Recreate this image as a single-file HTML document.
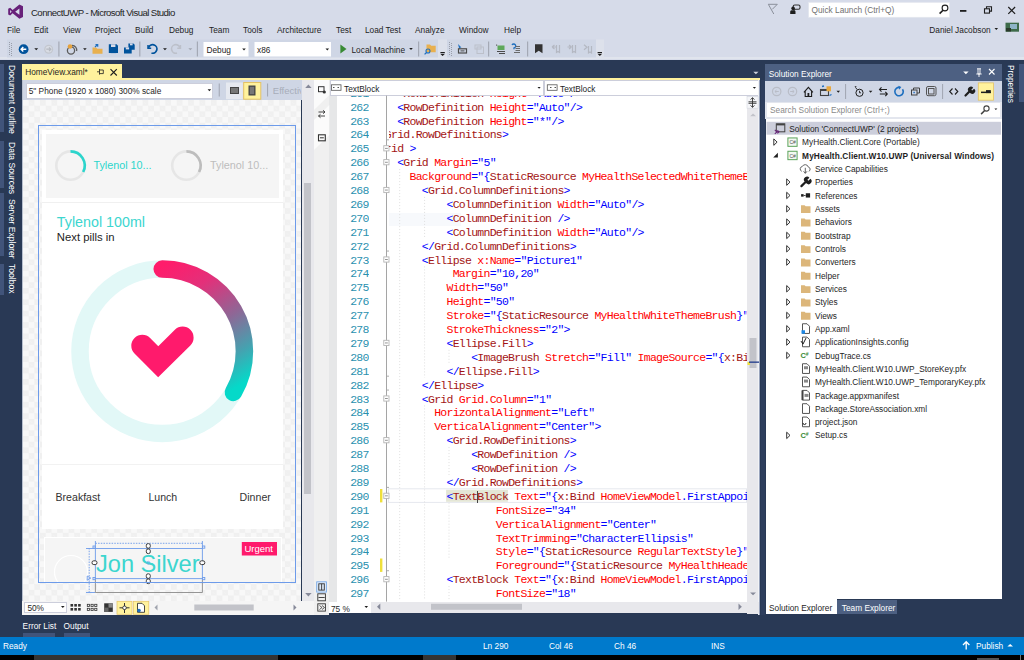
<!DOCTYPE html>
<html><head><meta charset="utf-8">
<style>
*{margin:0;padding:0;box-sizing:border-box}
html,body{width:1024px;height:660px;overflow:hidden;background:#293955;font-family:"Liberation Sans",sans-serif}
.a{position:absolute}
.t{position:absolute;white-space:nowrap;font-family:"Liberation Sans",sans-serif;font-size:8.3px;line-height:10px;color:#1E1E1E}
.m{font-family:"Liberation Mono",monospace}
svg{position:absolute;overflow:visible}
#lnums{left:337.5px;top:95.6px;width:31.2px;height:506px;overflow:hidden;font-family:"Liberation Mono",monospace;font-size:11.5px;letter-spacing:-0.737px;line-height:13.9px;color:#2B91AF}
#lnums div{position:absolute;right:0;white-space:pre}
#code{left:389px;top:95.6px;width:358.2px;height:506.2px;overflow:hidden;font-family:"Liberation Mono",monospace;font-size:11.5px;letter-spacing:-0.737px;line-height:13.9px}
#code div{position:absolute;white-space:pre}
.b{color:#0000FF}.e{color:#A31515}.r{color:#FF0000}

</style></head><body>
<!-- title + menu + toolbar -->
<div class="a" style="left:0;top:0;width:1024px;height:60px;background:#D6DBE9"></div>
<div class="a" style="left:0;top:57.4px;width:1024px;height:2.1px;background:#E0E4ED"></div>

<svg width="1024" height="60" style="left:0;top:0">
 <!-- vs logo -->
 <path fill="#68217A" fill-rule="evenodd" d="M19.4,4.5 L23,6.2 L23,17.1 L19.4,18.8 L12.6,13.3 L10.2,15.6 L8.2,14.6 L8.2,8.7 L10.2,7.7 L12.6,10 Z M19.4,8.6 L15.2,11.65 L19.4,14.7 Z M10.1,10.1 L10.1,13.2 L11.7,11.65 Z"/>
 <!-- toolbar bgs -->
 <rect x="7" y="39.5" width="431" height="18" fill="#CFD6E5"/>
 <rect x="438" y="39.5" width="9" height="18" fill="#DDE1EB"/>
 <rect x="447" y="39.5" width="149" height="18" fill="#CFD6E5"/>
 <rect x="596" y="39.5" width="8" height="18" fill="#DDE1EB"/>
 <!-- grips -->
 <g fill="#999EAA">
  <rect x="9" y="42" width="1" height="1"/><rect x="11" y="43" width="1" height="1"/><rect x="9" y="44" width="1" height="1"/><rect x="11" y="45" width="1" height="1"/><rect x="9" y="46" width="1" height="1"/><rect x="11" y="47" width="1" height="1"/><rect x="9" y="48" width="1" height="1"/><rect x="11" y="49" width="1" height="1"/><rect x="9" y="50" width="1" height="1"/><rect x="11" y="51" width="1" height="1"/><rect x="9" y="52" width="1" height="1"/><rect x="11" y="53" width="1" height="1"/><rect x="9" y="54" width="1" height="1"/><rect x="11" y="55" width="1" height="1"/>
  <rect x="449" y="42" width="1" height="1"/><rect x="451" y="43" width="1" height="1"/><rect x="449" y="44" width="1" height="1"/><rect x="451" y="45" width="1" height="1"/><rect x="449" y="46" width="1" height="1"/><rect x="451" y="47" width="1" height="1"/><rect x="449" y="48" width="1" height="1"/><rect x="451" y="49" width="1" height="1"/><rect x="449" y="50" width="1" height="1"/><rect x="451" y="51" width="1" height="1"/><rect x="449" y="52" width="1" height="1"/><rect x="451" y="53" width="1" height="1"/><rect x="449" y="54" width="1" height="1"/><rect x="451" y="55" width="1" height="1"/>
 </g>
 <!-- separators -->
 <g fill="#A4A9B5">
  <rect x="58.3" y="41.5" width="1.2" height="15"/><rect x="139.2" y="41.5" width="1.2" height="15"/><rect x="196.8" y="41.5" width="1.2" height="15"/>
  <rect x="418" y="41.5" width="1.2" height="15"/><rect x="488" y="41.5" width="1.2" height="15"/><rect x="527" y="41.5" width="1.2" height="15"/>
 </g>
 <!-- back / fwd -->
 <circle cx="23.6" cy="49.2" r="4.9" fill="#00539C"/>
 <path d="M26.3,49.2 H21.3 M23.3,47 L21.1,49.2 L23.3,51.4" stroke="#fff" stroke-width="1.4" fill="none"/>
 <circle cx="48.7" cy="49.2" r="4.5" fill="#C3C7CF"/>
 <circle cx="48.7" cy="49.2" r="3.2" fill="#D8DCE4"/>
 <path d="M46.3,49.2 H50.8 M49,47.3 L50.9,49.2 L49,51.1" stroke="#B4B8C0" stroke-width="1.2" fill="none"/>
 <!-- dropdown tris -->
 <g fill="#1E1E1E">
  <path d="M34.3,48.3 h3.9 l-1.95,2 z"/><path d="M83.1,48.3 h3.6 l-1.8,2 z"/><path d="M163,48.3 h3.9 l-1.95,2 z"/><path d="M409.2,48 h3.6 l-1.8,2 z"/>
 </g>
 <path d="M188.4,48.3 h3.9 l-1.95,2 z" fill="#A0A4AE"/>
 <!-- new project -->
 <circle cx="71" cy="50.5" r="3.6" fill="none" stroke="#5B5B5B" stroke-width="1.3"/>
 <path d="M72,45.5 a4.5,4.5 0 0 1 4.6,5.5" fill="none" stroke="#5B5B5B" stroke-width="1.3"/>
 <circle cx="70" cy="46.5" r="2.3" fill="#E6A23C"/>
 <!-- open -->
 <path d="M92.5,47.5 h3.5 l1.3,1.3 h5.2 v5 h-10 z" fill="#E8B04F"/>
 <path d="M95,47 l2.5,-2.5 M95.5,44.5 h2.2 v2.2" stroke="#1E6FBF" stroke-width="1.2" fill="none"/>
 <!-- save -->
 <path d="M108.8,44.3 h7.8 l1.4,1.4 v7.4 h-9.2 z" fill="#00539C"/>
 <rect x="111" y="44.3" width="4.4" height="2.7" fill="#D6DBE9"/>
 <rect x="110.6" y="49.3" width="5.6" height="3.8" fill="#00539C"/>
 <!-- save all -->
 <path d="M128.4,43.4 h5 l1.3,1.3 v5 h-6.3 z" fill="#00539C"/>
 <rect x="130" y="43.4" width="2.6" height="1.9" fill="#D6DBE9"/>
 <path d="M124,47.4 h6.4 l1.3,1.3 v4.9 h-7.7 z" fill="#00539C"/>
 <rect x="125.8" y="47.4" width="3.3" height="2.0" fill="#D6DBE9"/>
 <!-- undo/redo -->
 <path d="M148,45 v3.2 h3.2" fill="none" stroke="#00539C" stroke-width="1.5"/>
 <path d="M148.5,47.8 a4.3,4.3 0 1 1 3,5.3" fill="none" stroke="#00539C" stroke-width="1.7"/>
 <path d="M180.5,45 v3.2 h-3.2" fill="none" stroke="#BCC0CA" stroke-width="1.4"/>
 <path d="M180,47.8 a4.3,4.3 0 1 0 -3,5.3" fill="none" stroke="#BCC0CA" stroke-width="1.6"/>
 <!-- play -->
 <path d="M340.4,44.5 L346.5,49 L340.4,53.5 z" fill="#388A34"/>
 <!-- find in files -->
 <path d="M426.5,44.5 h3.5 l1.2,1.2 h4.5 v6.5 h-9.2 z" fill="#E8B04F"/>
 <circle cx="428" cy="51" r="2" fill="none" stroke="#1E6FBF" stroke-width="1.1"/>
 <path d="M426.6,52.4 l-2,2" stroke="#1E6FBF" stroke-width="1.3"/>
 <!-- overflow -->
 <g fill="#1E1E1E"><rect x="440.4" y="52" width="4.4" height="1"/><path d="M440.2,53.8 h4.8 l-2.4,2.3z"/>
 <rect x="597.6" y="52" width="4.4" height="1"/><path d="M597.4,53.8 h4.8 l-2.4,2.3z"/></g>
 <!-- tb2 icons -->
 <path d="M458,44 l3.5,3.5 l-1.6,0.2 l-0.6,1.6 z" fill="#1E6FBF"/>
 <rect x="458.5" y="48.8" width="8" height="4.2" fill="none" stroke="#4A4A4A" stroke-width="1.2"/>
 <rect x="460.5" y="50.4" width="4" height="1" fill="#4A4A4A"/>
 <g fill="none" stroke="#BCC0CA" stroke-width="1"><rect x="475" y="45" width="6" height="4"/><rect x="477" y="47" width="6.5" height="6.5"/></g>
 <rect x="497.5" y="45.5" width="7" height="4.5" fill="#5EA85A"/>
 <g fill="#4A4A4A"><rect x="497" y="51" width="8" height="1"/><rect x="499" y="53" width="6" height="1"/><rect x="496" y="44.6" width="1.2" height="1"/></g>
 <path d="M512,45 a2,2 0 1 1 2,3 v1.2" fill="none" stroke="#1E6FBF" stroke-width="1.3"/>
 <g fill="#6A6A6A"><rect x="515.5" y="46" width="4.5" height="1"/><rect x="515.5" y="48" width="4.5" height="1"/><rect x="515.5" y="50" width="4.5" height="1"/><rect x="514" y="52" width="6" height="1"/></g>
 <path d="M535,44.2 h7.5 v9 l-3.75,-2.4 l-3.75,2.4 z" fill="#333"/>
 <g fill="none" stroke="#B4B8C2" stroke-width="1.2">
  <path d="M552,47 l2.5,-2 M552,47 l2.5,2 M552,47 h4"/><path d="M556.5,45 v7.5 l1.5,-1 l1.5,1 v-7.5"/>
  <path d="M571.5,47 l-2.5,-2 M571.5,47 l-2.5,2 M567.5,47 h4"/><path d="M572.5,45 v7.5 l1.5,-1 l1.5,1 v-7.5"/>
  <path d="M584,44.8 l3,2.5 l-3,2.5"/><path d="M588.5,46 v7 l1.5,-1 l1.5,1 v-7"/>
 </g>
 <!-- combos -->
 <rect x="203.5" y="42" width="45" height="14.5" fill="#fff" stroke="#CCCEDB" stroke-width="0"/>
 <rect x="254.5" y="42" width="76.5" height="14.5" fill="#fff"/>
 <path d="M242.2,48.5 h3.6 l-1.8,2 z M325.5,48.5 h3.6 l-1.8,2 z" fill="#1E1E1E"/>
 <!-- right title controls -->
 <path d="M768.2,4.3 H777.3 L772.3,9.3 M768.4,4.4 L773.8,14" fill="none" stroke="#8A8F9A" stroke-width="1"/>
 <rect x="793.2" y="5" width="6.8" height="4.2" rx="1.5" fill="none" stroke="#333" stroke-width="1.1"/><path d="M795,9.2 l-1.2,1.6" stroke="#333" stroke-width="1"/><circle cx="793.1" cy="8.4" r="1.8" fill="#1E1E1E"/><path d="M790.2,13.9 v-2.4 a1.5,1.5 0 0 1 1.5,-1.2 h2.5 a1.5,1.5 0 0 1 1.3,1.2 v2.4 z" fill="#1E1E1E"/>
 <rect x="808.6" y="2.3" width="141" height="15" fill="#fff" stroke="#E3E6EE" stroke-width="0.8"/>
 <circle cx="945" cy="8" r="2.9" fill="none" stroke="#1E1E1E" stroke-width="1.1"/>
 <path d="M943,10.2 l-3.4,3.4" stroke="#1E1E1E" stroke-width="1.6"/>
 <rect x="960" y="10" width="6.4" height="1.8" fill="#1E1E1E"/>
 <g fill="none" stroke="#1E1E1E" stroke-width="1.1"><rect x="984.5" y="8.8" width="5" height="4.3"/><path d="M986.5,8.8 v-2 h5 v4.3 h-2"/></g>
 <path d="M1008.3,7 l6.8,6.8 M1015.1,7 l-6.8,6.8" stroke="#1E1E1E" stroke-width="1.2"/>
 <path d="M994.5,28 h3.6 l-1.8,2 z" fill="#1E1E1E"/>
 <rect x="1005.5" y="22.7" width="13.5" height="9" fill="#3E6B4A"/>
 <rect x="1010" y="24" width="7" height="5" fill="#8FB4C8"/>
 <rect x="1006" y="28" width="5" height="3.5" fill="#2A3A2A"/>
</svg>
<div class="t" style="left:811.5px;top:5px;color:#717171">Quick Launch (Ctrl+Q)</div>
<div class="t" style="left:929.3px;top:25px">Daniel Jacobson</div>
<div class="t" style="left:206.5px;top:44.5px">Debug</div>
<div class="t" style="left:257px;top:44.5px">x86</div>
<div class="t" style="left:351.5px;top:44.5px">Local Machine</div>

<div class="t" style="left:31px;top:7.5px;font-size:9.6px;letter-spacing:-0.56px;color:#1E1E1E">ConnectUWP - Microsoft Visual Studio</div>
<div class="t" style="left:7px;top:25px">File</div>
<div class="t" style="left:34px;top:25px">Edit</div>
<div class="t" style="left:63px;top:25px">View</div>
<div class="t" style="left:95px;top:25px">Project</div>
<div class="t" style="left:135px;top:25px">Build</div>
<div class="t" style="left:169px;top:25px">Debug</div>
<div class="t" style="left:209px;top:25px">Team</div>
<div class="t" style="left:243px;top:25px">Tools</div>
<div class="t" style="left:277px;top:25px">Architecture</div>
<div class="t" style="left:336px;top:25px">Test</div>
<div class="t" style="left:365px;top:25px">Load Test</div>
<div class="t" style="left:415px;top:25px">Analyze</div>
<div class="t" style="left:459px;top:25px">Window</div>
<div class="t" style="left:504px;top:25px">Help</div>


<!-- left vertical tabs -->
<div class="a" style="left:0;top:63.6px;width:4px;height:68.4px;background:#41547A"></div>
<div class="a" style="left:0;top:141.3px;width:4px;height:47px;background:#41547A"></div>
<div class="a" style="left:0;top:193px;width:4px;height:62.5px;background:#41547A"></div>
<div class="a" style="left:0;top:263.6px;width:4px;height:31px;background:#41547A"></div>
<div class="t" style="left:16.8px;top:64.5px;font-size:8.6px;color:#fff;transform-origin:0 0;transform:rotate(90deg)">Document Outline</div>
<div class="t" style="left:16.8px;top:142.3px;font-size:8.6px;color:#fff;transform-origin:0 0;transform:rotate(90deg)">Data Sources</div>
<div class="t" style="left:16.8px;top:199px;font-size:8.6px;color:#fff;transform-origin:0 0;transform:rotate(90deg)">Server Explorer</div>
<div class="t" style="left:16.8px;top:263.6px;font-size:8.6px;color:#fff;transform-origin:0 0;transform:rotate(90deg)">Toolbox</div>
<div class="a" style="left:1019.2px;top:64px;width:4.8px;height:37.6px;background:#41547A"></div>
<div class="t" style="left:1016px;top:64.7px;color:#fff;transform-origin:0 0;transform:rotate(90deg)">Properties</div>

<!-- doc tab -->
<div class="a" style="left:22px;top:64px;width:99.7px;height:16px;background:#FFF29D"></div>
<div class="a" style="left:22px;top:78.3px;width:738.2px;height:1.8px;background:#FFF29D"></div>
<div class="t" style="left:25.2px;top:67px">HomeView.xaml*</div>
<svg width="30" height="16" style="left:95px;top:64px">
 <path d="M2,7.8 h2.5 M4.5,5 v5.6 M4.5,6 h3.8 v3.6 h-3.8" fill="none" stroke="#1E1E1E" stroke-width="0.8"/>
 <path d="M15.5,5.2 l6.3,6.3 M21.8,5.2 l-6.3,6.3" stroke="#1E1E1E" stroke-width="1.1"/>
</svg>
<path></path>
<svg width="10" height="6" style="left:752px;top:70px"><path d="M1.3,1.7 h5.2 l-2.6,2.6 z" fill="#CED4DD"/></svg>

<!-- designer -->
<div class="a" style="left:22px;top:80px;width:279.5px;height:20px;background:#CFD6E5"></div>
<div class="a" style="left:22px;top:80px;width:1.3px;height:535px;background:#B8C0CF"></div>
<div id="designer-canvas" class="a" style="left:23.3px;top:100px;width:278.2px;height:501px;background-color:#F8F8F8;background-image:linear-gradient(45deg,#F0F0F0 25%,transparent 25%,transparent 75%,#F0F0F0 75%),linear-gradient(45deg,#F0F0F0 25%,transparent 25%,transparent 75%,#F0F0F0 75%);background-size:11.4px 11.4px;background-position:0 0,5.7px 5.7px"></div>
<div class="a" style="left:25.6px;top:82.5px;width:187.4px;height:16px;background:#fff;border:1px solid #CCCEDB"></div>
<div class="t" style="left:28.75px;top:86px">5" Phone (1920 x 1080) 300% scale</div>
<svg width="300" height="22" style="left:0;top:78px">
 <path d="M207.6,11.3 h3.6 l-1.8,2 z" fill="#1E1E1E"/>
 <rect x="218.7" y="5.5" width="1.1" height="13" fill="#A4A9B5"/>
 <rect x="226" y="4.5" width="16.8" height="16.7" fill="#E6E9F0"/>
 <rect x="230" y="9" width="9" height="7" fill="#444" /><rect x="231" y="10" width="7" height="5" fill="#777"/>
 <rect x="243.7" y="4.5" width="17.1" height="16.7" fill="#FFF29D" stroke="#E5C365" stroke-width="1"/>
 <rect x="248.5" y="7.5" width="7" height="10" fill="#444"/><rect x="249.8" y="8.8" width="4.4" height="7.4" fill="#777"/>
 <rect x="267" y="5.5" width="1.1" height="13" fill="#A4A9B5"/>
</svg>
<div class="t" style="left:272.8px;top:86px;width:28.5px;overflow:hidden;color:#A7ADB9;font-size:9.5px">Effective</div>

<!-- phone -->
<div class="a" style="left:41.5px;top:130px;width:241.5px;height:399px;background:#fff"></div>
<div class="a" style="left:45.9px;top:133.6px;width:233.5px;height:64px;background:#F5F5F5"></div>
<div class="a" style="left:41.5px;top:202px;width:241.5px;height:1px;background:#F0F0F0"></div>
<div class="a" style="left:41.5px;top:464px;width:241.5px;height:1px;background:#F2F2F2"></div>
<div class="a" style="left:44.2px;top:537.4px;width:238.3px;height:45px;background:#F5F5F5;border:1.5px solid #fff;border-bottom:none"></div>
<svg width="300" height="600" style="left:0;top:0">
 <circle cx="70.5" cy="165.6" r="14.2" fill="none" stroke="#E6E6E6" stroke-width="2.6"/>
 <path d="M70.5,151.4 A14.2,14.2 0 0 1 83.2,172" fill="none" stroke="#2BD5CC" stroke-width="2.6"/>
 <circle cx="186.4" cy="165.6" r="14.2" fill="none" stroke="#E6E6E6" stroke-width="2.6"/>
 <path d="M186.4,151.4 A14.2,14.2 0 0 1 199.1,172" fill="none" stroke="#BDBDBD" stroke-width="2.6"/>
 <defs>
  <linearGradient id="rg" x1="165" y1="265" x2="240" y2="385" gradientUnits="userSpaceOnUse">
   <stop offset="0" stop-color="#FF1C6B"/><stop offset="0.25" stop-color="#E3307A"/><stop offset="0.55" stop-color="#8E6796"/><stop offset="0.8" stop-color="#45A2B0"/><stop offset="1" stop-color="#05D9C9"/>
  </linearGradient>
 </defs>
 <circle cx="162.2" cy="351.3" r="82.2" fill="none" stroke="#E2F8F7" stroke-width="17.5"/>
 <path d="M162.2,269.1 A82.2,82.2 0 0 1 233.4,392.4" fill="none" stroke="url(#rg)" stroke-width="17.5" stroke-linecap="round"/>
 <path d="M142.3,345.8 L158.2,361.8 L182.6,337.6" fill="none" stroke="#FF1A6C" stroke-width="22" stroke-linecap="round" stroke-linejoin="miter"/>
 <rect x="241.8" y="542" width="35.2" height="13.5" fill="#FF1A6C"/>
 <clipPath id="pc"><rect x="38" y="125" width="258" height="457"/></clipPath><circle cx="71" cy="572" r="16.5" fill="none" stroke="#FFFFFF" stroke-width="1.2" clip-path="url(#pc)"/>
</svg>
<div class="t" style="left:93.4px;top:159px;font-size:10.8px;line-height:12px;color:#2BD5CC">Tylenol 10...</div>
<div class="t" style="left:210px;top:159px;font-size:10.8px;line-height:12px;color:#BDBDBD">Tylenol 10...</div>
<div class="t" style="left:56.8px;top:213.5px;font-size:14.3px;line-height:16px;color:#3CD6CF">Tylenol 100ml</div>
<div class="t" style="left:56.8px;top:231px;font-size:11.3px;line-height:12px;color:#1E1E1E">Next pills in</div>
<div class="t" style="left:55.5px;top:491px;font-size:10.6px;line-height:12px;color:#333">Breakfast</div>
<div class="t" style="left:148.4px;top:491px;font-size:10.6px;line-height:12px;color:#333">Lunch</div>
<div class="t" style="left:239.6px;top:491px;font-size:10.6px;line-height:12px;color:#333">Dinner</div>
<div class="t" style="left:244.5px;top:543px;font-size:9.5px;line-height:11px;color:#fff">Urgent</div>
<div class="t" style="left:96px;top:551px;font-size:23.6px;line-height:26px;color:#3CD6CF">Jon Silver</div>
<svg width="300" height="600" style="left:0;top:0">
 <g fill="none" stroke="#6D9BEA" stroke-width="0.9">
  <line x1="95.4" y1="548.5" x2="202.4" y2="548.5"/>
  <line x1="95.4" y1="578.6" x2="202.4" y2="578.6"/>
  <line x1="95.4" y1="541" x2="95.4" y2="580"/>
  <line x1="202.4" y1="541" x2="202.4" y2="580"/>
  <line x1="95.4" y1="543.3" x2="202.4" y2="543.3" stroke-dasharray="1.5,1.2"/>
  <line x1="89.2" y1="548" x2="89.2" y2="593" stroke-dasharray="1.5,1.2"/>
  <line x1="86" y1="548.5" x2="95.4" y2="548.5"/>
  <line x1="86" y1="592.5" x2="95.4" y2="592.5"/>
  <rect x="93" y="546" width="2.2" height="2.2"/><rect x="202.6" y="546" width="2.2" height="2.2"/>
  <rect x="93" y="577.5" width="2.2" height="2.2"/><rect x="202.6" y="577.5" width="2.2" height="2.2"/>
  <path d="M87.2,576 v4.2 l3.6,-2.1 z"/>
 </g>
 <g fill="none" stroke="#8A8A8A" stroke-width="0.9">
  <line x1="95.4" y1="580" x2="95.4" y2="592.5"/><line x1="202.4" y1="580" x2="202.4" y2="592.5"/><line x1="95.4" y1="592.5" x2="202.4" y2="592.5"/>
 </g>
 <g fill="#fff" stroke="#3A3A3A" stroke-width="1">
  <rect x="146.3" y="543.6" width="4" height="4.6" rx="1.8"/><rect x="146.3" y="549" width="4" height="4.6" rx="1.8"/>
  <rect x="146.3" y="573.8" width="4" height="4.6" rx="1.8"/><rect x="146.3" y="579" width="4" height="4.6" rx="1.8"/>
  <rect x="92" y="560.8" width="5" height="3.8" rx="1.8"/><rect x="199.8" y="560.8" width="5" height="3.8" rx="1.8"/>
 </g>
 <circle cx="148.3" cy="562.8" r="1.5" fill="none" stroke="#6D9BEA" stroke-width="0.7"/>
</svg>

<div class="a" id="pframe" style="left:37.8px;top:124.8px;width:258.4px;height:458px;border:1.3px solid #6D9BEA"></div>
<!-- designer vertical scrollbar -->
<div class="a" style="left:301.5px;top:80px;width:12.5px;height:521px;background:#E8E8EC"></div>
<div class="a" style="left:304.4px;top:183.4px;width:6.4px;height:310.4px;background:#C2C3C9"></div>
<svg width="14" height="520" style="left:301.5px;top:80px">
 <path d="M3.2,8 l3.2,-3.5 l3.2,3.5 z" fill="#868999"/>
 <path d="M3.2,513 l3.2,3.5 l3.2,-3.5 z" fill="#868999"/>
</svg>
<!-- designer bottom toolbar -->
<div class="a" style="left:22px;top:601px;width:292px;height:13.8px;background:#F5F5F5"></div>
<div class="a" style="left:24px;top:601.8px;width:43px;height:11px;background:#fff;border:1px solid #CCCEDB"></div>
<div class="t" style="left:27.4px;top:603px">50%</div>

<!-- split column -->
<div class="a" style="left:314px;top:80px;width:15.3px;height:535px;background:#F0F0F0"></div>

<!-- code editor -->
<div class="a" style="left:329.3px;top:80px;width:429.3px;height:521.8px;background:#fff"></div>
<div class="a" style="left:329.3px;top:80px;width:8.2px;height:521.8px;background:#E6E7E8"></div>
<div class="a" style="left:329.9px;top:80.3px;width:214px;height:15.3px;background:#fff;border:1px solid #CCCEDB"></div>
<div class="a" style="left:544px;top:80.3px;width:214.6px;height:15.3px;background:#fff;border:1px solid #CCCEDB"></div>
<div class="t" style="left:344px;top:83.5px">TextBlock</div>
<div class="t" style="left:560px;top:83.5px">TextBlock</div>
<div class="a" style="left:389px;top:213px;width:72px;height:13px;background:#F7F9FC"></div>
<!-- DECO START -->
<svg id="codedeco" width="1024" height="660" style="left:0;top:0;pointer-events:none"><rect x="388.5" y="488.8" width="358" height="13.6" fill="none" stroke="#E6E8EF" stroke-width="1"/><rect x="446.1" y="489.8" width="61.8" height="12" fill="#E4E6D6"/><rect x="386" y="95.6" width="1" height="506" fill="#A5A5A5"/><rect x="383.8" y="145.7" width="5.2" height="5.2" fill="#fff" stroke="#B5B5B5" stroke-width="0.9"/><rect x="385" y="147.9" width="2.8" height="0.9" fill="#8A8A8A"/><rect x="383.8" y="159.6" width="5.2" height="5.2" fill="#fff" stroke="#B5B5B5" stroke-width="0.9"/><rect x="385" y="161.8" width="2.8" height="0.9" fill="#8A8A8A"/><rect x="383.8" y="187.4" width="5.2" height="5.2" fill="#fff" stroke="#B5B5B5" stroke-width="0.9"/><rect x="385" y="189.6" width="2.8" height="0.9" fill="#8A8A8A"/><rect x="383.8" y="256.9" width="5.2" height="5.2" fill="#fff" stroke="#B5B5B5" stroke-width="0.9"/><rect x="385" y="259.1" width="2.8" height="0.9" fill="#8A8A8A"/><rect x="383.8" y="340.3" width="5.2" height="5.2" fill="#fff" stroke="#B5B5B5" stroke-width="0.9"/><rect x="385" y="342.5" width="2.8" height="0.9" fill="#8A8A8A"/><rect x="383.8" y="395.9" width="5.2" height="5.2" fill="#fff" stroke="#B5B5B5" stroke-width="0.9"/><rect x="385" y="398.1" width="2.8" height="0.9" fill="#8A8A8A"/><rect x="383.8" y="437.6" width="5.2" height="5.2" fill="#fff" stroke="#B5B5B5" stroke-width="0.9"/><rect x="385" y="439.8" width="2.8" height="0.9" fill="#8A8A8A"/><rect x="383.8" y="493.2" width="5.2" height="5.2" fill="#fff" stroke="#B5B5B5" stroke-width="0.9"/><rect x="385" y="495.4" width="2.8" height="0.9" fill="#8A8A8A"/><rect x="383.8" y="576.6" width="5.2" height="5.2" fill="#fff" stroke="#B5B5B5" stroke-width="0.9"/><rect x="385" y="578.8" width="2.8" height="0.9" fill="#8A8A8A"/><rect x="386.5" y="139.4" width="2.5" height="0.9" fill="#A5A5A5"/><rect x="386.5" y="250.6" width="2.5" height="0.9" fill="#A5A5A5"/><rect x="386.5" y="375.7" width="2.5" height="0.9" fill="#A5A5A5"/><rect x="386.5" y="389.6" width="2.5" height="0.9" fill="#A5A5A5"/><rect x="386.5" y="486.9" width="2.5" height="0.9" fill="#A5A5A5"/><rect x="386.5" y="570.3" width="2.5" height="0.9" fill="#A5A5A5"/><line x1="399.7" y1="169.1" x2="399.7" y2="600.1" stroke="#DEDEDE" stroke-width="1" stroke-dasharray="1,2"/><line x1="424.6" y1="196.9" x2="424.6" y2="238.7" stroke="#DEDEDE" stroke-width="1" stroke-dasharray="1,2"/><line x1="424.6" y1="266.4" x2="424.6" y2="377.7" stroke="#DEDEDE" stroke-width="1" stroke-dasharray="1,2"/><line x1="424.6" y1="405.4" x2="424.6" y2="600.1" stroke="#DEDEDE" stroke-width="1" stroke-dasharray="1,2"/><line x1="449.0" y1="349.8" x2="449.0" y2="363.8" stroke="#DEDEDE" stroke-width="1" stroke-dasharray="1,2"/><line x1="449.0" y1="447.1" x2="449.0" y2="475.0" stroke="#DEDEDE" stroke-width="1" stroke-dasharray="1,2"/><line x1="449.0" y1="502.7" x2="449.0" y2="558.4" stroke="#DEDEDE" stroke-width="1" stroke-dasharray="1,2"/><line x1="449.0" y1="586.1" x2="449.0" y2="600.1" stroke="#DEDEDE" stroke-width="1" stroke-dasharray="1,2"/><rect x="380" y="489.0" width="2.4" height="13.4" fill="#EFE03B"/><rect x="380" y="558.5" width="2.4" height="13.4" fill="#EFE03B"/></svg>

<!-- DECO END -->
<!-- CODE START -->
<div id="lnums" class="a"><div style="top:-8.80px">261</div><div style="top:5.10px">262</div><div style="top:19.00px">263</div><div style="top:32.90px">264</div><div style="top:46.80px">265</div><div style="top:60.70px">266</div><div style="top:74.60px">267</div><div style="top:88.50px">268</div><div style="top:102.40px">269</div><div style="top:116.30px">270</div><div style="top:130.20px">271</div><div style="top:144.10px">272</div><div style="top:158.00px">273</div><div style="top:171.90px">274</div><div style="top:185.80px">275</div><div style="top:199.70px">276</div><div style="top:213.60px">277</div><div style="top:227.50px">278</div><div style="top:241.40px">279</div><div style="top:255.30px">280</div><div style="top:269.20px">281</div><div style="top:283.10px">282</div><div style="top:297.00px">283</div><div style="top:310.90px">284</div><div style="top:324.80px">285</div><div style="top:338.70px">286</div><div style="top:352.60px">287</div><div style="top:366.50px">288</div><div style="top:380.40px">289</div><div style="top:394.30px">290</div><div style="top:408.20px">291</div><div style="top:422.10px">292</div><div style="top:436.00px">293</div><div style="top:449.90px">294</div><div style="top:463.80px">295</div><div style="top:477.70px">296</div><div style="top:491.60px">297</div></div>
<div id="code" class="a"><div style="top:-8.80px;left:8.16px"><span class="b">&lt;</span><span class="e">RowDefinition</span><span class="r"> Height</span><span class="b">=&quot;Auto&quot;/&gt;</span></div><div style="top:5.10px;left:8.16px"><span class="b">&lt;</span><span class="e">RowDefinition</span><span class="r"> Height</span><span class="b">=&quot;Auto&quot;/&gt;</span></div><div style="top:19.00px;left:8.16px"><span class="b">&lt;</span><span class="e">RowDefinition</span><span class="r"> Height</span><span class="b">=&quot;*&quot;/&gt;</span></div><div style="top:32.90px;left:-16.50px"><span class="b">&lt;/</span><span class="e">Grid.RowDefinitions</span><span class="b">&gt;</span></div><div style="top:46.80px;left:-22.67px"><span class="b">&lt;/</span><span class="e">Grid</span><span class="b"> &gt;</span></div><div style="top:60.70px;left:8.16px"><span class="b">&lt;</span><span class="e">Grid</span><span class="r"> Margin</span><span class="b">=&quot;5&quot;</span></div><div style="top:74.60px;left:20.49px"><span class="r">Background</span><span class="b">=&quot;{</span><span class="e">StaticResource</span><span class="r"> MyHealthSelectedWhiteThemeBrush</span><span class="b">}&quot;&gt;</span></div><div style="top:88.50px;left:32.82px"><span class="b">&lt;</span><span class="e">Grid.ColumnDefinitions</span><span class="b">&gt;</span></div><div style="top:102.40px;left:57.48px"><span class="b">&lt;</span><span class="e">ColumnDefinition</span><span class="r"> Width</span><span class="b">=&quot;Auto&quot;/&gt;</span></div><div style="top:116.30px;left:57.48px"><span class="b">&lt;</span><span class="e">ColumnDefinition</span><span class="b"> /&gt;</span></div><div style="top:130.20px;left:57.48px"><span class="b">&lt;</span><span class="e">ColumnDefinition</span><span class="r"> Width</span><span class="b">=&quot;Auto&quot;/&gt;</span></div><div style="top:144.10px;left:32.82px"><span class="b">&lt;/</span><span class="e">Grid.ColumnDefinitions</span><span class="b">&gt;</span></div><div style="top:158.00px;left:32.82px"><span class="b">&lt;</span><span class="e">Ellipse</span><span class="r"> x:Name</span><span class="b">=&quot;Picture1&quot;</span></div><div style="top:171.90px;left:63.64px"><span class="r">Margin</span><span class="b">=&quot;10,20&quot;</span></div><div style="top:185.80px;left:57.48px"><span class="r">Width</span><span class="b">=&quot;50&quot;</span></div><div style="top:199.70px;left:57.48px"><span class="r">Height</span><span class="b">=&quot;50&quot;</span></div><div style="top:213.60px;left:57.48px"><span class="r">Stroke</span><span class="b">=&quot;{</span><span class="e">StaticResource</span><span class="r"> MyHealthWhiteThemeBrush</span><span class="b">}&quot;</span></div><div style="top:227.50px;left:57.48px"><span class="r">StrokeThickness</span><span class="b">=&quot;2&quot;&gt;</span></div><div style="top:241.40px;left:57.48px"><span class="b">&lt;</span><span class="e">Ellipse.Fill</span><span class="b">&gt;</span></div><div style="top:255.30px;left:82.14px"><span class="b">&lt;</span><span class="e">ImageBrush</span><span class="r"> Stretch</span><span class="b">=&quot;Fill&quot;</span><span class="r"> ImageSource</span><span class="b">=&quot;{</span><span class="e">x:Bind</span><span class="r"> Item.Picture</span></div><div style="top:269.20px;left:57.48px"><span class="b">&lt;/</span><span class="e">Ellipse.Fill</span><span class="b">&gt;</span></div><div style="top:283.10px;left:32.82px"><span class="b">&lt;/</span><span class="e">Ellipse</span><span class="b">&gt;</span></div><div style="top:297.00px;left:32.82px"><span class="b">&lt;</span><span class="e">Grid</span><span class="r"> Grid.Column</span><span class="b">=&quot;1&quot;</span></div><div style="top:310.90px;left:45.15px"><span class="r">HorizontalAlignment</span><span class="b">=&quot;Left&quot;</span></div><div style="top:324.80px;left:45.15px"><span class="r">VerticalAlignment</span><span class="b">=&quot;Center&quot;&gt;</span></div><div style="top:338.70px;left:57.48px"><span class="b">&lt;</span><span class="e">Grid.RowDefinitions</span><span class="b">&gt;</span></div><div style="top:352.60px;left:82.14px"><span class="b">&lt;</span><span class="e">RowDefinition</span><span class="b"> /&gt;</span></div><div style="top:366.50px;left:82.14px"><span class="b">&lt;</span><span class="e">RowDefinition</span><span class="b"> /&gt;</span></div><div style="top:380.40px;left:57.48px"><span class="b">&lt;/</span><span class="e">Grid.RowDefinitions</span><span class="b">&gt;</span></div><div style="top:394.30px;left:57.48px"><span class="b">&lt;</span><span class="e">TextBlock</span><span class="r"> Text</span><span class="b">=&quot;{</span><span class="e">x:Bind</span><span class="r"> HomeViewModel</span><span class="b">.FirstAppointment</span></div><div style="top:408.20px;left:106.80px"><span class="r">FontSize</span><span class="b">=&quot;34&quot;</span></div><div style="top:422.10px;left:106.80px"><span class="r">VerticalAlignment</span><span class="b">=&quot;Center&quot;</span></div><div style="top:436.00px;left:106.80px"><span class="r">TextTrimming</span><span class="b">=&quot;CharacterEllipsis&quot;</span></div><div style="top:449.90px;left:106.80px"><span class="r">Style</span><span class="b">=&quot;{</span><span class="e">StaticResource</span><span class="r"> RegularTextStyle</span><span class="b">}&quot;</span></div><div style="top:463.80px;left:106.80px"><span class="r">Foreground</span><span class="b">=&quot;{</span><span class="e">StaticResource</span><span class="r"> MyHealthHeaderBrush</span><span class="b">}&quot;</span></div><div style="top:477.70px;left:57.48px"><span class="b">&lt;</span><span class="e">TextBlock</span><span class="r"> Text</span><span class="b">=&quot;{</span><span class="e">x:Bind</span><span class="r"> HomeViewModel</span><span class="b">.FirstAppointment</span></div><div style="top:491.60px;left:106.80px"><span class="r">FontSize</span><span class="b">=&quot;18&quot;</span></div></div>

<!-- CODE END -->
<div class="a" style="left:477.3px;top:490.5px;width:0.9px;height:12px;background:#444"></div>
<!-- code v scrollbar -->
<div class="a" style="left:747.3px;top:95.6px;width:10.3px;height:518px;background:#E8E8EC"></div>
<div class="a" style="left:757.6px;top:80px;width:1.2px;height:534.5px;background:#F2F3F6"></div>
<div class="a" style="left:758.8px;top:80px;width:1.3px;height:534.5px;background:#9AA5BD"></div>
<!-- code h scrollbar -->
<div class="a" style="left:329.3px;top:601.8px;width:429.3px;height:11.5px;background:#E8E8EC"></div>
<div class="a" style="left:329.4px;top:602.4px;width:41.2px;height:10.3px;background:#fff"></div>
<div class="t" style="left:331px;top:603.5px">75 %</div>

<!-- solution explorer -->
<div class="a" style="left:760.6px;top:80px;width:4px;height:535px;background:#2E3E5D"></div>
<div class="a" style="left:765px;top:64.2px;width:236.6px;height:16.5px;background:#4D6082"></div>
<div class="t" style="left:768.7px;top:68.5px;color:#fff">Solution Explorer</div>
<div class="a" style="left:765px;top:80.7px;width:236.6px;height:21.7px;background:#CFD6E5"></div>
<div class="a" style="left:765px;top:102.4px;width:236.6px;height:16.5px;background:#E3E6EE"></div>
<div class="a" style="left:766.6px;top:103px;width:233px;height:14.3px;background:#fff"></div>
<div class="t" style="left:770px;top:105.3px;color:#8A8A8A">Search Solution Explorer (Ctrl+;)</div>
<div class="a" style="left:765.5px;top:118.9px;width:236px;height:479.9px;background:#fff"></div>
<div class="a" style="left:765.5px;top:598.8px;width:71.8px;height:15.2px;background:#fff"></div>
<div class="t" style="left:769px;top:602.5px">Solution Explorer</div>
<div class="a" style="left:837.3px;top:600.3px;width:59.7px;height:13.7px;background:#4D6082"></div>
<div class="t" style="left:841.8px;top:603px;color:#fff">Team Explorer</div>

<!-- SE START -->
<svg width="1024" height="660" style="left:0;top:0"><rect x="766.5" y="121.8" width="234.5" height="12.9" fill="#CCCEDB"/><rect x="776.3" y="123.80000000000001" width="8.5" height="8" fill="none" stroke="#424242" stroke-width="1"/><rect x="776.3" y="123.80000000000001" width="8.5" height="1.6" fill="#424242"/><path d="M774.8,129.8 l2.2,2 l-2.2,2 M777.4,130.3 l1.5,1.5 l-1.5,1.5" stroke="#68217A" stroke-width="1.1" fill="none"/><path d="M773.8,138.93000000000004 L777.0999999999999,142.13000000000002 L773.8,145.33 Z" fill="none" stroke="#1E1E1E" stroke-width="0.9"/><rect x="787.9" y="137.93000000000004" width="9.2" height="8.4" fill="#F3F8F3" stroke="#5CA35A" stroke-width="1"/><text x="789.4" y="144.33" font-family="Liberation Sans" font-size="5" fill="#555">C#</text><path d="M777.9,152.86 L777.9,157.56 L773.1999999999999,157.56 Z" fill="#1E1E1E"/><rect x="787.9" y="151.26000000000002" width="9.2" height="8.4" fill="#F3F8F3" stroke="#5CA35A" stroke-width="1"/><text x="789.4" y="157.66" font-family="Liberation Sans" font-size="5" fill="#555">C#</text><path d="M801.8,171.29000000000002 a2.5,2.5 0 0 1 0.5,-4.8 a3.2,3.2 0 0 1 6,0.6 a2.2,2.2 0 0 1 0.5,4.2" fill="none" stroke="#555" stroke-width="0.9"/><path d="M805.3,167.79000000000002 v5.5 M803.5999999999999,171.29000000000002 l1.7,2 l1.7,-2" stroke="#555" stroke-width="0.9" fill="none"/><path d="M786.7,178.92000000000002 L790.0,182.12 L786.7,185.32 Z" fill="none" stroke="#1E1E1E" stroke-width="0.9"/><path d="M801.4,186.12 L805.6,181.92000000000002" stroke="#1E1E1E" stroke-width="2.2" stroke-linecap="round"/><path d="M804.6,181.62 a3,3 0 0 1 4.8,-3.8 l-2,2 l1,1 l2,-2 a3,3 0 0 1 -3.8,4.8 z" fill="#1E1E1E"/><path d="M786.7,192.25000000000003 L790.0,195.45000000000002 L786.7,198.65 Z" fill="none" stroke="#1E1E1E" stroke-width="0.9"/><rect x="801.1" y="194.15" width="2.5" height="2.5" fill="#1E1E1E"/><rect x="803.6" y="195.15" width="2" height="0.8" fill="#1E1E1E"/><rect x="805.8000000000001" y="193.25000000000003" width="4.3" height="4.3" fill="#1E1E1E"/><path d="M786.7,205.58000000000004 L790.0,208.78000000000003 L786.7,211.98000000000002 Z" fill="none" stroke="#1E1E1E" stroke-width="0.9"/><path d="M801,205.18000000000004 h3.6 l1,1 h4.9 v6.9 h-9.5 z" fill="#DCB67A"/><path d="M786.7,218.91000000000003 L790.0,222.11 L786.7,225.31 Z" fill="none" stroke="#1E1E1E" stroke-width="0.9"/><path d="M801,218.51000000000002 h3.6 l1,1 h4.9 v6.9 h-9.5 z" fill="#DCB67A"/><path d="M786.7,232.24 L790.0,235.44 L786.7,238.64 Z" fill="none" stroke="#1E1E1E" stroke-width="0.9"/><path d="M801,231.84 h3.6 l1,1 h4.9 v6.9 h-9.5 z" fill="#DCB67A"/><path d="M786.7,245.57000000000002 L790.0,248.77 L786.7,251.97 Z" fill="none" stroke="#1E1E1E" stroke-width="0.9"/><path d="M801,245.17000000000002 h3.6 l1,1 h4.9 v6.9 h-9.5 z" fill="#DCB67A"/><path d="M786.7,258.90000000000003 L790.0,262.1 L786.7,265.3 Z" fill="none" stroke="#1E1E1E" stroke-width="0.9"/><path d="M801,258.5 h3.6 l1,1 h4.9 v6.9 h-9.5 z" fill="#DCB67A"/><path d="M801,271.83 h3.6 l1,1 h4.9 v6.9 h-9.5 z" fill="#DCB67A"/><path d="M786.7,285.56 L790.0,288.76 L786.7,291.96 Z" fill="none" stroke="#1E1E1E" stroke-width="0.9"/><path d="M801,285.15999999999997 h3.6 l1,1 h4.9 v6.9 h-9.5 z" fill="#DCB67A"/><path d="M786.7,298.89000000000004 L790.0,302.09000000000003 L786.7,305.29 Z" fill="none" stroke="#1E1E1E" stroke-width="0.9"/><path d="M801,298.49 h3.6 l1,1 h4.9 v6.9 h-9.5 z" fill="#DCB67A"/><path d="M786.7,312.22 L790.0,315.42 L786.7,318.62 Z" fill="none" stroke="#1E1E1E" stroke-width="0.9"/><path d="M801,311.82 h3.6 l1,1 h4.9 v6.9 h-9.5 z" fill="#DCB67A"/><path d="M786.7,325.55 L790.0,328.75 L786.7,331.95 Z" fill="none" stroke="#1E1E1E" stroke-width="0.9"/><path d="M802.5,323.75 h4.5 l2.5,2.5 v7.2 h-7 z" fill="#fff" stroke="#424242" stroke-width="0.9"/><rect x="801.5" y="330.25" width="3.5" height="3.5" fill="#1E88E5"/><path d="M786.7,338.88000000000005 L790.0,342.08000000000004 L786.7,345.28000000000003 Z" fill="none" stroke="#1E1E1E" stroke-width="0.9"/><path d="M802.5,337.08000000000004 h4.5 l2.5,2.5 v7.2 h-7 z" fill="#fff" stroke="#424242" stroke-width="0.9"/><path d="M801,341.08000000000004 l2,3 l3,-6" stroke="#1E1E1E" stroke-width="1" fill="none"/><path d="M786.7,352.21000000000004 L790.0,355.41 L786.7,358.61 Z" fill="none" stroke="#1E1E1E" stroke-width="0.9"/><text x="800.5" y="358.01000000000005" font-family="Liberation Sans" font-weight="bold" font-size="7.5" fill="#388A34">C</text><text x="805.8" y="355.91" font-family="Liberation Sans" font-weight="bold" font-size="5" fill="#388A34">#</text><path d="M802.5,363.74 h4.5 l2.5,2.5 v7.2 h-7 z" fill="#fff" stroke="#424242" stroke-width="0.9"/><rect x="804" y="366.24" width="4" height="3" fill="#888"/><path d="M802.5,377.07000000000005 h4.5 l2.5,2.5 v7.2 h-7 z" fill="#fff" stroke="#424242" stroke-width="0.9"/><rect x="804" y="379.57000000000005" width="4" height="3" fill="#888"/><path d="M802.5,390.40000000000003 h4.5 l2.5,2.5 v7.2 h-7 z" fill="#fff" stroke="#424242" stroke-width="0.9"/><rect x="801.5" y="390.40000000000003" width="2" height="9.7" fill="#424242"/><rect x="804.5" y="393.90000000000003" width="4" height="3" fill="#888"/><path d="M802.5,403.73 h4.5 l2.5,2.5 v7.2 h-7 z" fill="#fff" stroke="#424242" stroke-width="0.9"/><path d="M802.5,417.06 h4.5 l2.5,2.5 v7.2 h-7 z" fill="#fff" stroke="#424242" stroke-width="0.9"/><path d="M803,423.06 a1.5,1.5 0 0 0 3,0" stroke="#1E1E1E" stroke-width="1" fill="none"/><path d="M786.7,432.19 L790.0,435.39 L786.7,438.59 Z" fill="none" stroke="#1E1E1E" stroke-width="0.9"/><text x="800.5" y="437.99" font-family="Liberation Sans" font-weight="bold" font-size="7.5" fill="#388A34">C</text><text x="805.8" y="435.89" font-family="Liberation Sans" font-weight="bold" font-size="5" fill="#388A34">#</text></svg>
<div class="t" style="left:789.2px;top:123.90px;">Solution 'ConnectUWP' (2 projects)</div>
<div class="t" style="left:802.1px;top:137.23px;">MyHealth.Client.Core (Portable)</div>
<div class="t" style="left:802.1px;top:150.56px;font-weight:bold;letter-spacing:0.12px;">MyHealth.Client.W10.UWP (Universal Windows)</div>
<div class="t" style="left:815px;top:163.89px;">Service Capabilities</div>
<div class="t" style="left:815px;top:177.22px;">Properties</div>
<div class="t" style="left:815px;top:190.55px;">References</div>
<div class="t" style="left:815px;top:203.88px;">Assets</div>
<div class="t" style="left:815px;top:217.21px;">Behaviors</div>
<div class="t" style="left:815px;top:230.54px;">Bootstrap</div>
<div class="t" style="left:815px;top:243.87px;">Controls</div>
<div class="t" style="left:815px;top:257.20px;">Converters</div>
<div class="t" style="left:815px;top:270.53px;">Helper</div>
<div class="t" style="left:815px;top:283.86px;">Services</div>
<div class="t" style="left:815px;top:297.19px;">Styles</div>
<div class="t" style="left:815px;top:310.52px;">Views</div>
<div class="t" style="left:815px;top:323.85px;">App.xaml</div>
<div class="t" style="left:815px;top:337.18px;">ApplicationInsights.config</div>
<div class="t" style="left:815px;top:350.51px;">DebugTrace.cs</div>
<div class="t" style="left:815px;top:363.84px;">MyHealth.Client.W10.UWP_StoreKey.pfx</div>
<div class="t" style="left:815px;top:377.17px;">MyHealth.Client.W10.UWP_TemporaryKey.pfx</div>
<div class="t" style="left:815px;top:390.50px;">Package.appxmanifest</div>
<div class="t" style="left:815px;top:403.83px;">Package.StoreAssociation.xml</div>
<div class="t" style="left:815px;top:417.16px;">project.json</div>
<div class="t" style="left:815px;top:430.49px;">Setup.cs</div>

<!-- SE END -->
<!-- bottom tabs -->
<div class="t" style="left:22.6px;top:620.5px;color:#fff">Error List</div>
<div class="a" style="left:22.6px;top:633px;width:32px;height:3.7px;background:#41547A"></div>
<div class="t" style="left:63.6px;top:620.5px;color:#fff">Output</div>
<div class="a" style="left:63.6px;top:633px;width:26.7px;height:3.7px;background:#41547A"></div>


<svg width="1024" height="660" style="left:0;top:0">
 <!-- SE title buttons -->
 <path d="M963.2,71.5 h5.4 l-2.7,2.8 z" fill="#fff"/>
 <g stroke="#fff" stroke-width="0.9" fill="none"><path d="M977,68.8 h4 M978,68.8 v5.2 h2 v-5.2 M976.3,74 h5.4 M979,74 v3"/></g>
 <path d="M989,69 l5.5,5.5 M994.5,69 l-5.5,5.5" stroke="#fff" stroke-width="1.1"/>
 <!-- SE toolbar -->
 <circle cx="776.7" cy="91.5" r="4.2" fill="none" stroke="#B9BDC7" stroke-width="1.2"/>
 <path d="M778.8,91.5 h-3.8 M776.5,90 l-1.6,1.5 l1.6,1.5" stroke="#B9BDC7" stroke-width="1" fill="none"/>
 <circle cx="792.5" cy="91.5" r="4.2" fill="none" stroke="#B9BDC7" stroke-width="1.2"/>
 <path d="M790.2,91.5 h3.8 M792.5,90 l1.6,1.5 l-1.6,1.5" stroke="#B9BDC7" stroke-width="1" fill="none"/>
 <path d="M803.9,92.3 L808.4,87.3 L812.9,92.3 M805.2,91.2 v5.3 h6.4 v-5.3" fill="none" stroke="#1E1E1E" stroke-width="1.1"/>
 <rect x="807.5" y="93" width="1.8" height="3.5" fill="#1E1E1E"/>
 <rect x="820.5" y="89.5" width="8" height="6" fill="none" stroke="#424242" stroke-width="1.1"/>
 <rect x="820.5" y="89.5" width="8" height="1.5" fill="#424242"/>
 <rect x="826.5" y="86.3" width="4.5" height="5" fill="#E8A83E"/>
 <path d="M822,86.5 l2,-0.5 M829.5,95.5 l2,-1" stroke="#1E6FBF" stroke-width="1.3"/>
 <path d="M836.5,90.8 h3.6 l-1.8,2 z M868.8,90.8 h3.6 l-1.8,2 z M994.4,108.5 h3 l-1.5,1.6 z" fill="#1E1E1E"/>
 <rect x="845" y="84" width="1.1" height="15" fill="#A4A9B5"/>
 <rect x="942" y="84" width="1.1" height="15" fill="#A4A9B5"/>
 <path d="M854.5,86.2 l2.2,0 l-1.1,1.5 z" fill="#1E1E1E"/>
 <circle cx="859.5" cy="92.8" r="3.6" fill="none" stroke="#1E1E1E" stroke-width="1"/>
 <path d="M859.5,90.8 v2 h1.5 M855.6,87.5 l1.5,2" stroke="#1E1E1E" stroke-width="0.9" fill="none"/>
 <path d="M879.5,89.5 h7.5 M881.5,87.3 l-2,2.2 l2,2.2 M887.3,94 h-7.5 M885.3,91.8 l2,2.2 l-2,2.2" stroke="#1E1E1E" stroke-width="1.1" fill="none"/>
 <path d="M902.5,89.2 a4.2,4.2 0 1 1 -2.5,-1.7" fill="none" stroke="#1E6FBF" stroke-width="1.6"/>
 <path d="M898.3,85.8 l3,1.3 l-2,2.6 z" fill="#1E6FBF"/>
 <g fill="none" stroke="#424242" stroke-width="1"><rect x="911.5" y="90" width="5.5" height="5"/><path d="M913.5,90 v-2 h6 v5 h-2.5"/></g>
 <rect x="913.4" y="91.8" width="1.4" height="1.4" fill="#1E6FBF"/>
 <g fill="none" stroke="#555" stroke-width="1"><rect x="926.5" y="86.5" width="9.5" height="9.2" rx="1.5"/><rect x="928.5" y="88.5" width="5.5" height="5.5"/></g>
 <path d="M952.5,88.5 l-2.8,3 l2.8,3 M955,88.5 l2.8,3 l-2.8,3" fill="none" stroke="#1E1E1E" stroke-width="1.1"/>
 <path d="M965.5,95.5 L969.2,91.8" stroke="#1E1E1E" stroke-width="2.2" stroke-linecap="round"/>
 <path d="M968.6,91.5 a2.9,2.9 0 0 1 4.6,-3.7 l-1.9,1.9 l0.9,0.9 l1.9,-1.9 a2.9,2.9 0 0 1 -3.7,4.6 z" fill="#1E1E1E"/>
 <rect x="978.3" y="82.9" width="15.3" height="17.3" fill="#FFF29D" stroke="#E5C365" stroke-width="0.8"/>
 <rect x="981" y="91.6" width="9.8" height="1.5" fill="#1E1E1E"/><rect x="986" y="90.1" width="4.8" height="3" fill="#1E1E1E"/>
 <circle cx="986.5" cy="108.5" r="2.6" fill="none" stroke="#424242" stroke-width="1.1"/>
 <path d="M984.7,110.5 l-3.6,3.6" stroke="#424242" stroke-width="1.5"/>
 <!-- code editor: combo icons -->
 <g fill="none" stroke="#555" stroke-width="0.8"><rect x="331.5" y="84.8" width="9.5" height="5.5"/><rect x="547.3" y="84.8" width="9.8" height="5.5"/></g>
 <g fill="#555"><rect x="333" y="87" width="1.5" height="1"/><rect x="337.5" y="87" width="1.5" height="1"/><rect x="550" y="87" width="1.5" height="1"/><rect x="554.5" y="87" width="1.5" height="1"/></g>
 <path d="M537.5,87 h3.2 l-1.6,1.8 z M752.8,87 h3.2 l-1.6,1.8 z" fill="#1E1E1E"/>
 <!-- splitter button -->
 <rect x="747" y="96.6" width="11.1" height="11.6" fill="#F5F6F9" stroke="#D5D9E2" stroke-width="0.6"/>
 <path d="M752.5,97.8 v9.5 M750.5,99.5 l2,-1.7 l2,1.7 M750.5,105.5 l2,1.7 l2,-1.7 M748.5,101.8 h8 M748.5,103.3 h8" stroke="#333" stroke-width="0.9" fill="none"/>
 <path d="M750.1,116.2 l2.95,-2.8 l2.95,2.8 z" fill="#C2C3C9"/>
 <path d="M750.1,592.5 l2.95,2.8 l2.95,-2.8 z" fill="#868999"/>
 <!-- code v-scrollbar thumb + marks -->
 <rect x="749.5" y="338" width="7" height="30" fill="#C2C3C9"/>
 <rect x="747.5" y="362" width="2.5" height="3" fill="#EFE03B"/>
 <rect x="749" y="361.5" width="10" height="1.3" fill="#1E3A8A"/>
 <!-- code h-scrollbar -->
 <path d="M380.3,603.5 l-3.3,3.2 l3.3,3.2 z" fill="#868999"/>
 <path d="M738.5,603.5 l3.3,3.2 l-3.3,3.2 z" fill="#868999"/>
 <rect x="431" y="603.8" width="91" height="6" fill="#C2C3C9"/>
 <path d="M364.5,606 h3.6 l-1.8,2 z" fill="#1E1E1E"/>
 <!-- split column buttons -->
 <path d="M314,80 L329.3,80 L329.3,95 L314,110 Z" fill="#FFFFFF" opacity="0.7"/>
 <path d="M314,120 L329.3,105 L329.3,135 L314,150 Z" fill="#FFFFFF" opacity="0.7"/>
 <g fill="none" stroke="#333" stroke-width="1">
  <rect x="318.5" y="86.7" width="5.5" height="5"/>
 </g>
 <circle cx="324.3" cy="92" r="1.6" fill="#333"/>
 <path d="M318.5,112 h6.5 M323,110.3 l2,1.7 l-2,1.7 M325,116 h-6.5 M320.5,114.3 l-2,1.7 l2,1.7" stroke="#333" stroke-width="0.9" fill="none"/>
 <rect x="318.5" y="134.8" width="6.8" height="6" fill="none" stroke="#333" stroke-width="1.1"/>
 <rect x="320" y="137.3" width="3.8" height="1" fill="#333"/>
 <rect x="316.7" y="581.8" width="9.7" height="10.3" fill="#DCE8F8" stroke="#6FA3E6" stroke-width="0.8"/>
 <rect x="318.8" y="583.8" width="5.5" height="6.3" fill="none" stroke="#333" stroke-width="0.9"/>
 <rect x="321.2" y="583.8" width="0.9" height="6.3" fill="#333"/>
 <rect x="317.8" y="593.8" width="7.6" height="7" fill="none" stroke="#333" stroke-width="0.9"/>
 <rect x="318.5" y="597" width="6.2" height="0.9" fill="#333"/>
 <rect x="317.8" y="603.8" width="7.6" height="7.3" fill="none" stroke="#333" stroke-width="0.9"/>
 <path d="M319.5,605.5 l2.5,2 l-2.5,2 M322,605.5 l2.5,2 l-2.5,2" stroke="#333" stroke-width="0.8" fill="none"/>
 <!-- designer bottom toolbar -->
 <path d="M61,606 h3.6 l-1.8,2 z" fill="#1E1E1E"/>
 <g fill="#333">
  <rect x="70.5" y="604" width="2.6" height="2.6"/><rect x="74.3" y="604" width="2.6" height="2.6"/><rect x="78.1" y="604" width="2.6" height="2.6"/>
  <rect x="70.5" y="608" width="2.6" height="2.6"/><rect x="74.3" y="608" width="2.6" height="2.6"/><rect x="78.1" y="608" width="2.6" height="2.6"/>
 </g>
 <g fill="none" stroke="#333" stroke-width="0.8">
  <rect x="87.3" y="604.3" width="2.2" height="2.2"/><rect x="91" y="604.3" width="2.2" height="2.2"/><rect x="94.7" y="604.3" width="2.2" height="2.2"/>
  <rect x="87.3" y="608.3" width="2.2" height="2.2"/><rect x="91" y="608.3" width="2.2" height="2.2"/><rect x="94.7" y="608.3" width="2.2" height="2.2"/>
 </g>
 <rect x="104.2" y="603.3" width="8.6" height="8.6" fill="#333"/>
 <rect x="108.5" y="603.3" width="4.3" height="4.3" fill="#888"/><rect x="104.2" y="607.6" width="4.3" height="4.3" fill="#666"/>
 <rect x="117" y="601.3" width="15" height="13" fill="#FFF29D" stroke="#E5C365" stroke-width="0.7"/>
 <path d="M124.5,603 v10 M119.5,607.8 h10" stroke="#333" stroke-width="1"/>
 <circle cx="124.5" cy="607.8" r="1.8" fill="#fff" stroke="#333" stroke-width="0.9"/>
 <rect x="133.5" y="601.3" width="15.3" height="13" fill="#FFF29D" stroke="#E5C365" stroke-width="0.7"/>
 <path d="M137.5,603.3 h4.5 l2.5,2.5 v6.5 h-7 z" fill="#fff" stroke="#333" stroke-width="0.9"/>
 <circle cx="139" cy="610.5" r="1.8" fill="#1E6FBF"/>
 <path d="M157.5,604.5 l-3,3 l3,3 z" fill="#A0A4AE"/>
 <rect x="194.3" y="604.5" width="59.4" height="6" fill="#C2C3C9"/>
 <path d="M293.5,604.5 l3,3 l-3,3 z" fill="#868999"/>
</svg>

<!-- status bar -->
<div class="a" style="left:0;top:637px;width:1024px;height:18px;background:#007ACC"></div>
<div class="t" style="left:3px;top:641px;color:#fff">Ready</div>
<div class="t" style="left:483px;top:641px;color:#fff">Ln 290</div>
<div class="t" style="left:549px;top:641px;color:#fff">Col 46</div>
<div class="t" style="left:614px;top:641px;color:#fff">Ch 46</div>
<div class="t" style="left:711px;top:641px;color:#fff">INS</div>
<div class="t" style="left:976px;top:641px;color:#fff">Publish</div>
<div class="a" style="left:0;top:655px;width:1024px;height:5px;background:#000"></div>
<div class="a" style="left:34px;top:655px;width:244px;height:5px;background:#343434"></div>
<div class="a" style="left:422.5px;top:655px;width:33.5px;height:5px;background:#343434"></div>
<div class="a" style="left:1020px;top:655px;width:1px;height:5px;background:#777"></div>
<div class="a" style="left:977px;top:658px;width:22px;height:2px;background:#555"></div>
<svg width="1024" height="660" style="left:0;top:0">
 <path d="M966.2,649.5 v-7.5 M963,645 l3.2,-3.3 l3.2,3.3" stroke="#fff" stroke-width="1.3" fill="none"/>
 <path d="M1007.4,646.5 l2.8,-2.6 l2.8,2.6 z" fill="#fff"/>
</svg>
</body></html>
